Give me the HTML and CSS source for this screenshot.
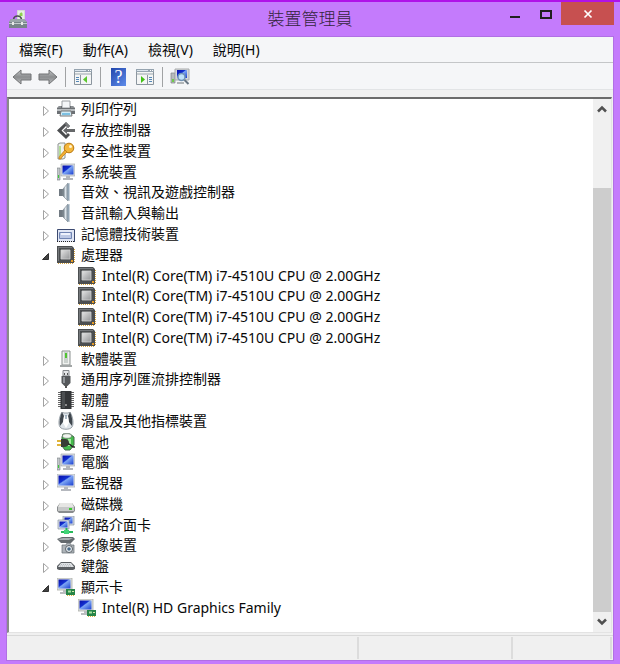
FILE: index.html
```html
<!DOCTYPE html>
<html lang="zh-Hant">
<head>
<meta charset="utf-8">
<title>裝置管理員</title>
<link rel="stylesheet" href="styles.css">
</head>
<body>
<svg class="defs" aria-hidden="true">
  <defs>
    <linearGradient id="steel" x1="0" y1="0" x2="0" y2="1"><stop offset="0" stop-color="#c4c6c8"/><stop offset=".5" stop-color="#8b8d8f"/><stop offset="1" stop-color="#bcbec0"/></linearGradient>
    <linearGradient id="blue" x1="0" y1="0" x2="1" y2="1"><stop offset="0" stop-color="#0a10a8"/><stop offset=".4" stop-color="#1230d0"/><stop offset=".48" stop-color="#7da6f4"/><stop offset="1" stop-color="#1a3fd0"/></linearGradient>
    <linearGradient id="chip" x1="0" y1="0" x2="1" y2="1"><stop offset="0" stop-color="#e4e4e4"/><stop offset="1" stop-color="#929496"/></linearGradient>
    <linearGradient id="cone" x1="0" y1="0" x2="1" y2="0"><stop offset="0" stop-color="#5e6870"/><stop offset=".5" stop-color="#dce4ea"/><stop offset="1" stop-color="#74828d"/></linearGradient>
  </defs>
  <symbol id="i-printer" viewBox="0 0 18 18"><path d="M5 1h8v7H5z" fill="#f4f6f8" stroke="#9a9ea2"/><path d="M0 8l2-2h3v2h8V6h3l2 2v6H0z" fill="#6c7074"/><path d="M1 7h3M14 7h3" stroke="#a9adb0"/><path d="M0 9h18v2H0z" fill="#b9bdc0"/><path d="M4 11h10l1 5H3z" fill="#d3ecf7" stroke="#777"/><path d="M5 13h8v2H5z" fill="#7cc0e2"/></symbol>
  <symbol id="i-storage" viewBox="0 0 18 18"><path d="M9 1l4 4-2 2-2-2-4.500 4.500L9 14l2-2 2 2-4 4-9-8.500z" fill="#4c4e50"/><path d="M9 1l4 4-2 2-3-4z" fill="#7a7c7e"/><path d="M6 9.500L10 6v2h8v3h-8v2z" fill="#66686a"/></symbol>
  <symbol id="i-security" viewBox="0 0 18 18"><path d="M1 2l2-1h5v15l-2 1H1z" fill="#eef2ee" stroke="#8e9492"/><path d="M3 4v10" stroke="#76c840"/><circle cx="12" cy="6" r="4.800" fill="#f4b73c" stroke="#b87812"/><circle cx="13.500" cy="4.500" r="1.500" fill="#fff4cf"/><path d="M8 8l2 2-5 5-1 2H2v-2z" fill="#f1ad30" stroke="#b87812" stroke-width=".7"/></symbol>
  <symbol id="i-computer" viewBox="0 0 18 18"><path d="M0 5h3v12H0z" fill="#c2c6ca" stroke="#777d82" stroke-width=".6"/><path d="M1 12h1v3H1z" fill="#3ecb38"/><path d="M4 1h14v12H4z" fill="#dcdfe2" stroke="#999ea4" stroke-width=".6"/><path d="M5.500 2.500h11v9h-11z" fill="url(#blue)"/><path d="M9 13h4v2h3v2H6v-2h3z" fill="#b3b6bb"/></symbol>
  <symbol id="i-speaker" viewBox="0 0 18 18"><path d="M2 6h4v7H2z" fill="#717a82"/><path d="M6 6l5-6v18l-5-5z" fill="url(#cone)" stroke="#87929b" stroke-width=".7"/><path d="M10.500 1l2-1v18l-2-1z" fill="#93a6b5"/></symbol>
  <symbol id="i-memory" viewBox="0 0 18 18"><path d="M0 4h18v13H0z" fill="#e1e7f5"/><path d="M.5 17V4.500h17V17" fill="none" stroke="#3c4a70"/><path d="M0 16.500h18" stroke="#222" stroke-dasharray="1 1"/><path d="M2.500 7.500h12v6h-12z" fill="#bdc9e5" stroke="#7185b3"/><path d="M4 8h9v2H4z" fill="#eef2fc"/></symbol>
  <symbol id="i-cpu" viewBox="0 0 18 18"><path d="M17.500 3v14M1 17.500h16" stroke="#d5a23d" stroke-dasharray="1 1"/><path d="M0 0h15l2 2v15H0z" fill="#4b4e50"/><path d="M1 1h14v1H2v13H1z" fill="#74777a"/><path d="M4 4h9v9H4z" fill="url(#chip)" stroke="#d0d2d2" stroke-width=".8"/><path d="M14 14h2v2h-2z" fill="#e89b22"/></symbol>
  <symbol id="i-software" viewBox="0 0 18 18"><path d="M5 1h8v14H5z" fill="#f0f2f0" stroke="#8b9190"/><path d="M7 2h4v11H7z" fill="#cbd1ce"/><path d="M9 3v5" stroke="#50c431" stroke-width="2"/><path d="M3 15h12v2H3z" fill="#a2a6a6"/></symbol>
  <symbol id="i-usb" viewBox="0 0 18 18"><path d="M6 .5h6V6H6z" fill="#e2e4e6" stroke="#83878b"/><path d="M7 3h1v2H7zM10 3h1v2h-1z" fill="#555"/><path d="M4.500 6h9v7l-3 3h-3l-3-3z" fill="#55585b"/><path d="M6 7h2v6H6z" fill="#919599"/><path d="M9 15v3" stroke="#555" stroke-width="2"/></symbol>
  <symbol id="i-firmware" viewBox="0 0 18 18"><path d="M2.500 1v16M15.500 1v16" stroke="#666" stroke-width="3" stroke-dasharray="1 1"/><path d="M3.500 0h11v18h-11z" fill="#343638"/><path d="M5 1h3v16H5z" fill="#4c4f51"/><circle cx="9" cy="14" r="1" fill="#aaa"/></symbol>
  <symbol id="i-mouse" viewBox="0 0 18 18"><path d="M5 0l2 1h4l2-1c3 5 4 12 2 15-2 3-10 3-12 0-2-3-1-10 2-15z" fill="#dfe5ea" stroke="#9aa2a9"/><path d="M5 0l2 4-1 6-3 4C2 10 3 4 5 0zM13 0l-2 4 1 6 3 4c1-4 0-10-2-14z" fill="#3f464d"/><path d="M7 4h4l1 7-3 5-3-5z" fill="#fff"/><path d="M9 3v4" stroke="#58758d"/></symbol>
  <symbol id="i-battery" viewBox="0 0 18 18"><path d="M6 1h7l4 3v8l-4 5H8l-3-4V4z" fill="#45bb4c" stroke="#44684a"/><ellipse cx="10" cy="3" rx="4.500" ry="2.300" fill="#f0f5ef" stroke="#6c7d6e" stroke-width=".7"/><path d="M11 6h3v7h-3z" fill="#a2ec9c"/><path d="M0 8h5M0 12h5" stroke="#e0b43a" stroke-width="2"/><path d="M4 6h3c4 0 5 2 5 4s-2 4-5 4H4z" fill="#383c35"/><path d="M11 11c4 0 3 4 7 3" stroke="#222" fill="none" stroke-width="1.500"/></symbol>
  <symbol id="i-monitor" viewBox="0 0 18 18"><path d="M0 0h18v13H0z" fill="#e4e6e9" stroke="#9fa4ab" stroke-width=".7"/><path d="M1.500 1.500h15v10h-15z" fill="url(#blue)"/><path d="M7 13h4v2h3v2H4v-2h3z" fill="#b5b8be"/></symbol>
  <symbol id="i-disk" viewBox="0 0 18 18"><path d="M3 8h12l3 4v4l-2 2H2l-2-2v-4z" fill="#898c8e"/><path d="M3 8h12l2 4H1z" fill="#e6e6e4"/><path d="M1 12h16v4H1z" fill="#c6c8c8"/><path d="M12 13h3v2h-3z" fill="#39c92d"/></symbol>
  <symbol id="i-network" viewBox="0 0 18 18"><path d="M6 0h11v9H6z" fill="#d5dbe3" stroke="#8893a2" stroke-width=".7"/><path d="M7.500 1.500h8v6h-8z" fill="url(#blue)"/><path d="M1 4h11v9H1z" fill="#dce1e8" stroke="#8893a2" stroke-width=".7"/><path d="M2.500 5.500h8v6h-8z" fill="url(#blue)"/><path d="M9.500 12v4M4 16h12" stroke="#28ba5b" stroke-width="2"/><path d="M7 14h5v4H7z" fill="#40d477"/></symbol>
  <symbol id="i-imaging" viewBox="0 0 18 18"><path d="M0 3l5-2h11l2 2-4 4H4z" fill="#63696d"/><path d="M1 3l5-1h10l-4 2H3z" fill="#a8aeb2"/><path d="M5 9h4l1-2h3l1 2h3v8H5z" fill="#aeb4b9" stroke="#666d73" stroke-width=".7"/><circle cx="12" cy="13" r="3.500" fill="#edf1f4" stroke="#596168"/><circle cx="12" cy="13" r="1.800" fill="#496986"/></symbol>
  <symbol id="i-keyboard" viewBox="0 0 18 18"><path d="M4 5h10l4 4v3l-2 1H2l-2-1V9z" fill="#5c6064"/><path d="M4 6h10l3 4H1z" fill="#dfe2e5"/><path d="M4 7.500h10M3 9h12" stroke="#b6babe" stroke-dasharray="1 1"/></symbol>
  <symbol id="i-display" viewBox="0 0 18 18"><path d="M0 0h15v12H0z" fill="#e1e2df" stroke="#a1a39e" stroke-width=".7"/><path d="M1.500 1.500h12v9h-12z" fill="url(#blue)"/><path d="M6 12h3v2h1v2H3v-2h3z" fill="#bbbdc0"/><path d="M9 11h9v6H9z" fill="#268448"/><path d="M11 12.500h3v2h-3z" fill="#a7dfa0"/><path d="M15 13h2v1h-2z" fill="#d4e7a5"/><path d="M10 17.500h7" stroke="#e3b543" stroke-dasharray="1 1"/></symbol>
  <symbol id="i-toolbox" viewBox="0 0 20 20"><path d="M9.500 1.500h7v10h-7z" fill="#e7eee5" stroke="#d4dcd2"/><path d="M11.500 5c1-2 3-2 3 0v2h-3z" fill="#8fd04f"/><path d="M5.500 10c1-4 7-4 8 0" fill="none" stroke="#4c5053" stroke-width="1.500"/><path d="M3 10h13l3 3v6H1v-6z" fill="#788489"/><path d="M3 10h13l3 3H1z" fill="#9ba6aa"/><path d="M1 14.500h18" stroke="#c3cbcd"/><path d="M4 13h2v3H4zM13 13h2v3h-2z" fill="#e7e9e8"/></symbol>
  <symbol id="i-back" viewBox="0 0 20 18"><path d="M1 9l8-7v4h10v6H9v4z" fill="url(#steel)" stroke="#717375" stroke-linejoin="round"/></symbol>
  <symbol id="i-console" viewBox="0 0 20 18"><path d="M1.500 1.500h17v15h-17z" fill="#f4f5f5" stroke="#8b959e"/><path d="M1 1h18v3H1z" fill="#96a4b0"/><path d="M2 2.500h11" stroke="#dce5ed"/><path d="M15 2.500h1M17 2.500h1" stroke="#fff"/><path d="M2 5h16v2H2z" fill="#c7cdd1"/><path d="M7.500 7v9" stroke="#8b959e"/><path d="M3 9.500h3M3 11.500h3M3 13.500h3" stroke="#5587b7"/><path d="M14 8v7l-4-3.500z" fill="#5ac72d"/></symbol>
  <symbol id="i-action" viewBox="0 0 20 18"><path d="M1.500 1.500h17v15h-17z" fill="#f4f5f5" stroke="#8b959e"/><path d="M1 1h18v3H1z" fill="#96a4b0"/><path d="M2 2.500h11" stroke="#dce5ed"/><path d="M15 2.500h1M17 2.500h1" stroke="#fff"/><path d="M2 5h16v2H2z" fill="#c7cdd1"/><path d="M12.500 7v9" stroke="#8b959e"/><path d="M14 9.500h3M14 11.500h3M14 13.500h3" stroke="#5587b7"/><path d="M6 8v7l4-3.500z" fill="#42c016"/></symbol>
  <symbol id="i-scan" viewBox="0 0 20 18"><path d="M1 5h4v10H1z" fill="#b7bbbd" stroke="#7f8588" stroke-width=".7"/><path d="M2 11h2v3H2z" fill="#70cc4b"/><path d="M5 1h14v11H5z" fill="#d6d8da" stroke="#a8abad"/><path d="M7 2h10v8H7z" fill="url(#blue)"/><path d="M7 14h7v2H7z" fill="#b1b5b7"/><circle cx="11.500" cy="9" r="3.500" fill="#bfe2fb" stroke="#7193b5" stroke-width="1.500"/><path d="M14.500 12l4 4" stroke="#697785" stroke-width="2"/></symbol>
  <symbol id="i-closed" viewBox="0 0 9 16"><path d="M1.500 5.500v9L6.500 10z" fill="#fff" stroke="#a2a2a2"/></symbol>
  <symbol id="i-open" viewBox="0 0 9 16"><path d="M6.500 6.500v6h-6z" fill="#424242" stroke="#303030"/></symbol>
</svg>

<div class="window">
  <header class="titlebar">
    <svg class="app-icon" aria-hidden="true"><use href="#i-toolbox"/></svg>
    <h1 class="title">裝置管理員</h1>
    <div class="controls">
      <button class="control" type="button" aria-label="最小化"><svg width="10" height="12"><path d="M0 9h10" stroke="#202020" stroke-width="2"/></svg></button>
      <button class="control" type="button" aria-label="最大化"><svg width="12" height="10"><path d="M1 2h10v7H1z" fill="none" stroke="#202020" stroke-width="2"/></svg></button>
      <button class="control close" type="button" aria-label="關閉"><svg width="10" height="10"><path d="M1.500 1.500l7 7M8.500 1.500l-7 7" stroke="#fff" stroke-width="1.700"/></svg></button>
    </div>
  </header>

  <div class="frame">
    <nav class="menubar">
      <button class="menu" type="button">檔案(F)</button>
      <button class="menu" type="button">動作(A)</button>
      <button class="menu" type="button">檢視(V)</button>
      <button class="menu" type="button">說明(H)</button>
    </nav>
    <div class="toolbar" role="toolbar">
      <button class="tool" type="button" aria-label="上一頁"><svg><use href="#i-back"/></svg></button>
      <button class="tool forward" type="button" aria-label="下一頁"><svg><use href="#i-back"/></svg></button>
      <span class="divider"></span>
      <button class="tool" type="button" aria-label="主控台樹狀目錄"><svg><use href="#i-console"/></svg></button>
      <span class="divider"></span>
      <button class="tool help" type="button" aria-label="說明">?</button>
      <button class="tool" type="button" aria-label="動作窗格"><svg><use href="#i-action"/></svg></button>
      <span class="divider"></span>
      <button class="tool" type="button" aria-label="掃描硬體變更"><svg><use href="#i-scan"/></svg></button>
    </div>

    <main class="pane">
      <ul class="tree" role="tree">
        <li class="row" role="treeitem" aria-level="1"><button class="toggle" type="button" aria-label="展開"><svg><use href="#i-closed"/></svg></button><svg class="icon"><use href="#i-printer"/></svg><span>列印佇列</span></li>
        <li class="row" role="treeitem" aria-level="1"><button class="toggle" type="button" aria-label="展開"><svg><use href="#i-closed"/></svg></button><svg class="icon"><use href="#i-storage"/></svg><span>存放控制器</span></li>
        <li class="row" role="treeitem" aria-level="1"><button class="toggle" type="button" aria-label="展開"><svg><use href="#i-closed"/></svg></button><svg class="icon"><use href="#i-security"/></svg><span>安全性裝置</span></li>
        <li class="row" role="treeitem" aria-level="1"><button class="toggle" type="button" aria-label="展開"><svg><use href="#i-closed"/></svg></button><svg class="icon"><use href="#i-computer"/></svg><span>系統裝置</span></li>
        <li class="row" role="treeitem" aria-level="1"><button class="toggle" type="button" aria-label="展開"><svg><use href="#i-closed"/></svg></button><svg class="icon"><use href="#i-speaker"/></svg><span>音效、視訊及遊戲控制器</span></li>
        <li class="row" role="treeitem" aria-level="1"><button class="toggle" type="button" aria-label="展開"><svg><use href="#i-closed"/></svg></button><svg class="icon"><use href="#i-speaker"/></svg><span>音訊輸入與輸出</span></li>
        <li class="row" role="treeitem" aria-level="1"><button class="toggle" type="button" aria-label="展開"><svg><use href="#i-closed"/></svg></button><svg class="icon"><use href="#i-memory"/></svg><span>記憶體技術裝置</span></li>
        <li class="row" role="treeitem" aria-level="1" aria-expanded="true"><button class="toggle" type="button" aria-label="摺疊"><svg><use href="#i-open"/></svg></button><svg class="icon"><use href="#i-cpu"/></svg><span>處理器</span></li>
        <li class="row child" role="treeitem" aria-level="2"><svg class="icon"><use href="#i-cpu"/></svg><span>Intel(R) Core(TM) i7-4510U CPU @ 2.00GHz</span></li>
        <li class="row child" role="treeitem" aria-level="2"><svg class="icon"><use href="#i-cpu"/></svg><span>Intel(R) Core(TM) i7-4510U CPU @ 2.00GHz</span></li>
        <li class="row child" role="treeitem" aria-level="2"><svg class="icon"><use href="#i-cpu"/></svg><span>Intel(R) Core(TM) i7-4510U CPU @ 2.00GHz</span></li>
        <li class="row child" role="treeitem" aria-level="2"><svg class="icon"><use href="#i-cpu"/></svg><span>Intel(R) Core(TM) i7-4510U CPU @ 2.00GHz</span></li>
        <li class="row" role="treeitem" aria-level="1"><button class="toggle" type="button" aria-label="展開"><svg><use href="#i-closed"/></svg></button><svg class="icon"><use href="#i-software"/></svg><span>軟體裝置</span></li>
        <li class="row" role="treeitem" aria-level="1"><button class="toggle" type="button" aria-label="展開"><svg><use href="#i-closed"/></svg></button><svg class="icon"><use href="#i-usb"/></svg><span>通用序列匯流排控制器</span></li>
        <li class="row" role="treeitem" aria-level="1"><button class="toggle" type="button" aria-label="展開"><svg><use href="#i-closed"/></svg></button><svg class="icon"><use href="#i-firmware"/></svg><span>韌體</span></li>
        <li class="row" role="treeitem" aria-level="1"><button class="toggle" type="button" aria-label="展開"><svg><use href="#i-closed"/></svg></button><svg class="icon"><use href="#i-mouse"/></svg><span>滑鼠及其他指標裝置</span></li>
        <li class="row" role="treeitem" aria-level="1"><button class="toggle" type="button" aria-label="展開"><svg><use href="#i-closed"/></svg></button><svg class="icon"><use href="#i-battery"/></svg><span>電池</span></li>
        <li class="row" role="treeitem" aria-level="1"><button class="toggle" type="button" aria-label="展開"><svg><use href="#i-closed"/></svg></button><svg class="icon"><use href="#i-computer"/></svg><span>電腦</span></li>
        <li class="row" role="treeitem" aria-level="1"><button class="toggle" type="button" aria-label="展開"><svg><use href="#i-closed"/></svg></button><svg class="icon"><use href="#i-monitor"/></svg><span>監視器</span></li>
        <li class="row" role="treeitem" aria-level="1"><button class="toggle" type="button" aria-label="展開"><svg><use href="#i-closed"/></svg></button><svg class="icon"><use href="#i-disk"/></svg><span>磁碟機</span></li>
        <li class="row" role="treeitem" aria-level="1"><button class="toggle" type="button" aria-label="展開"><svg><use href="#i-closed"/></svg></button><svg class="icon"><use href="#i-network"/></svg><span>網路介面卡</span></li>
        <li class="row" role="treeitem" aria-level="1"><button class="toggle" type="button" aria-label="展開"><svg><use href="#i-closed"/></svg></button><svg class="icon"><use href="#i-imaging"/></svg><span>影像裝置</span></li>
        <li class="row" role="treeitem" aria-level="1"><button class="toggle" type="button" aria-label="展開"><svg><use href="#i-closed"/></svg></button><svg class="icon"><use href="#i-keyboard"/></svg><span>鍵盤</span></li>
        <li class="row" role="treeitem" aria-level="1" aria-expanded="true"><button class="toggle" type="button" aria-label="摺疊"><svg><use href="#i-open"/></svg></button><svg class="icon"><use href="#i-display"/></svg><span>顯示卡</span></li>
        <li class="row child" role="treeitem" aria-level="2"><svg class="icon"><use href="#i-display"/></svg><span>Intel(R) HD Graphics Family</span></li>
      </ul>
      <div class="scrollbar">
        <button class="scroll-button" type="button" aria-label="向上捲動"><svg width="10" height="8"><path d="M1 6.500l4-4 4 4" fill="none" stroke="#505050" stroke-width="2.500"/></svg></button>
        <div class="track"><div class="thumb"></div></div>
        <button class="scroll-button" type="button" aria-label="向下捲動"><svg width="10" height="8"><path d="M1 1.500l4 4 4-4" fill="none" stroke="#505050" stroke-width="2.500"/></svg></button>
      </div>
    </main>
    <footer class="statusbar">
      <span class="status wide"></span>
      <span class="status medium"></span>
      <span class="status narrow"></span>
    </footer>
  </div>
</div>
</body>
</html>
```
FILE: styles.css
```css
* {
  box-sizing: border-box;
}

body {
  margin: 0;
  color: #080808;
  background: #c47bfc;
  font-family: "Noto Sans", "Noto Sans CJK TC", sans-serif;
  font-size: 14px;
}

button {
  display: flex;
  align-items: center;
  justify-content: center;
  padding: 0;
  border: 0;
  background: none;
  color: inherit;
  font: inherit;
}

svg {
  display: block;
  flex: none;
}

.defs {
  position: absolute;
  width: 0;
  height: 0;
}

.window {
  display: flex;
  flex-direction: column;
  min-height: 100vh;
  padding: 0 6px 3px;
  border-top: 2px solid #b012e8;
}

.titlebar {
  display: grid;
  grid-template-columns: 1fr auto 1fr;
  align-items: start;
  height: 34px;
}

.app-icon {
  width: 20px;
  height: 20px;
  margin: 7px 2px;
}

.title {
  margin: 0;
  color: #33253d;
  font-family: "Noto Sans CJK TC", sans-serif;
  font-size: 17px;
  font-weight: 300;
  line-height: 32px;
}

.controls {
  display: flex;
  justify-content: flex-end;
}

.control {
  width: 31px;
  height: 23px;
}

.close {
  width: 53px;
  background: #c75050;
}

.frame {
  display: flex;
  flex: 1;
  flex-direction: column;
  border: 1px solid #b070e4;
  background: #f0f0f0;
}

.menubar {
  display: flex;
  gap: 20px;
  height: 26px;
  padding: 0 12px;
  border-bottom: 1px solid #c4c6c8;
  background: #f5f6f8;
}

.menu {
  line-height: 24px;
}

.toolbar {
  display: flex;
  align-items: center;
  gap: 6px;
  height: 27px;
  padding: 2px 5px 0;
  border-bottom: 1px solid #e2e4e6;
  background: #f5f6f8;
}

.tool svg {
  width: 20px;
  height: 18px;
}

.forward {
  transform: scaleX(-1);
}

.divider {
  width: 1px;
  height: 20px;
  margin: 0 1px;
  background: #a0a2a4;
}

.help {
  width: 15px;
  height: 18px;
  margin: 0 3px;
  background: linear-gradient(135deg, #2146ac, #5f8cea);
  color: #fff;
  font-family: "Liberation Serif", serif;
  font-size: 18px;
  line-height: 18px;
}

.pane {
  display: flex;
  flex: 1;
  margin: 7px 1px 2px 0;
  border: 1px solid #e3e3e3;
  border-top: 2px solid #6b6b6b;
  border-left: 2px solid #8a8a8a;
  background: #fff;
}

.tree {
  display: flex;
  flex: 1;
  flex-direction: column;
  margin: 0;
  padding: 0 0 14px 33px;
  list-style: none;
}

.row {
  display: flex;
  flex: 1;
  align-items: center;
  gap: 6px;
  line-height: 20px;
  white-space: nowrap;
}

.toggle,
.toggle svg {
  width: 9px;
  height: 16px;
}

.icon {
  width: 18px;
  height: 18px;
}

.child {
  padding-left: 36px;
}

.scrollbar {
  display: flex;
  flex-direction: column;
  width: 18px;
  background: #f0f0f0;
}

.scroll-button {
  height: 20px;
}

.track {
  display: flex;
  flex: 1;
  flex-direction: column;
  justify-content: flex-end;
}

.thumb {
  height: 86%;
  background: #cdcdcd;
}

.statusbar {
  display: flex;
  height: 25px;
  padding: 1px 1px 1px 0;
  border-top: 1px solid #d9d9d9;
}

.status {
  border-right: 2px solid #dcdcdc;
}

.wide {
  flex: 353;
}

.medium {
  flex: 153;
}

.narrow {
  flex: 98;
}
```
